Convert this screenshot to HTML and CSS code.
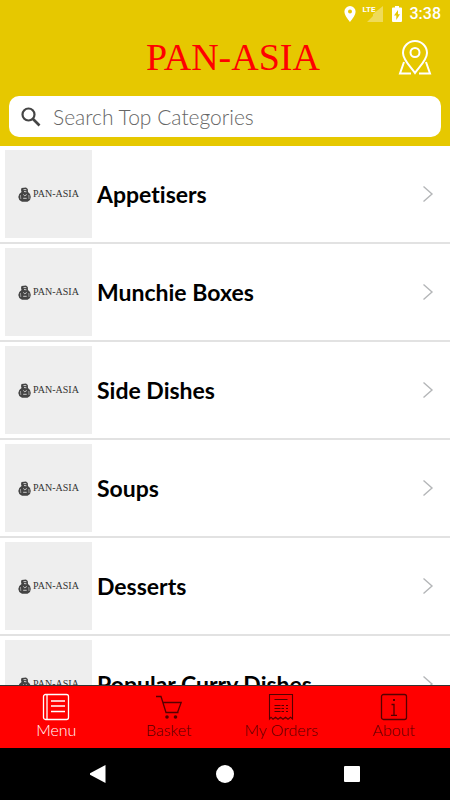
FILE: index.html
```html
<!DOCTYPE html>
<html lang="en">
<head>
<meta charset="utf-8">
<meta name="viewport" content="width=device-width, initial-scale=1">
<title>Pan-Asia</title>
<link rel="stylesheet" href="styles.css">
</head>
<body>
<svg class="defs" aria-hidden="true">
  <symbol id="chevron" viewBox="0 0 12 18"><path d="M1.500 1.500 10 9l-8.500 7.500" fill="none" stroke="#b4b6b8" stroke-width="1.400"/></symbol>
  <symbol id="figure" viewBox="0 0 13 15">
    <path d="M3.500 1 8 .4 9.800 2 10 5l2 2 .8 3-.8 3-2.500 1.700H4L1.300 13 .3 10l1-3L3.500 5 3 3z" fill="#444"/>
    <path d="M5.500 2.600h2.800M6 4.500l2.400.3M5.300 7.500l1.500 1.300 2-1.300M5.200 11.300h3.500" fill="none" stroke="#ccc" stroke-width="1"/>
    <path d="M2.400 8l.4 4M10.800 8l.2 4" fill="none" stroke="#999" stroke-width="1"/>
  </symbol>
</svg>
<div class="app">
  <header class="header">
    <div class="status">
      <svg width="12" height="16" viewBox="0 0 12 16"><path fill="#fff" fill-rule="evenodd" d="M6 0a5.600 5.600 0 0 0-5.600 5.600C.4 9.800 6 16 6 16s5.600-6.200 5.600-10.400A5.600 5.600 0 0 0 6 0zm0 3.600a2 2 0 1 1 0 4 2 2 0 0 1 0-4z"/></svg>
      <span class="signal"><svg width="20" height="16" viewBox="0 0 20 16"><path fill="#fff" fill-opacity=".35" d="M20 0v16H4l6-6V8z"/></svg><span class="lte">LTE</span></span>
      <svg class="battery" width="10" height="16" viewBox="0 0 10 16"><path fill="#fff" fill-rule="evenodd" d="M3 0h4v1.500h2q1 0 1 1V15q0 1-1 1H1q-1 0-1-1V2.500q0-1 1-1h2zm3 4L2 9.500h2.300V14L8 8.300H6z"/></svg>
      <span class="time">3:38</span>
    </div>
    <div class="titlebar">
      <h1 class="title">PAN-ASIA</h1>
      <button class="locate" aria-label="Find us">
        <svg width="34" height="36" viewBox="0 0 34 36" fill="none" stroke="#fff" stroke-width="2"><path d="M17 33C13 27 5 20 5 13a12 12 0 0 1 24 0c0 7-8 14-12 20z"/><circle cx="17" cy="12.500" r="4.500"/><path d="M6 22 2 33.500h11M28 22l4 11.500H21"/></svg>
      </button>
    </div>
    <label class="search">
      <svg width="20" height="20" viewBox="0 0 20 20" fill="none" stroke="#444"><circle cx="7.500" cy="7.500" r="6" stroke-width="2.200"/><path d="m12 12 6.500 6.500" stroke-width="2.600"/></svg>
      <input type="search" placeholder="Search Top Categories" aria-label="Search Top Categories">
    </label>
  </header>
  <main class="list">
    <button class="row"><span class="thumb"><svg width="13" height="15"><use href="#figure"/></svg>PAN-ASIA</span><span class="name">Appetisers</span><svg width="12" height="18"><use href="#chevron"/></svg></button>
    <button class="row"><span class="thumb"><svg width="13" height="15"><use href="#figure"/></svg>PAN-ASIA</span><span class="name">Munchie Boxes</span><svg width="12" height="18"><use href="#chevron"/></svg></button>
    <button class="row"><span class="thumb"><svg width="13" height="15"><use href="#figure"/></svg>PAN-ASIA</span><span class="name">Side Dishes</span><svg width="12" height="18"><use href="#chevron"/></svg></button>
    <button class="row"><span class="thumb"><svg width="13" height="15"><use href="#figure"/></svg>PAN-ASIA</span><span class="name">Soups</span><svg width="12" height="18"><use href="#chevron"/></svg></button>
    <button class="row"><span class="thumb"><svg width="13" height="15"><use href="#figure"/></svg>PAN-ASIA</span><span class="name">Desserts</span><svg width="12" height="18"><use href="#chevron"/></svg></button>
    <button class="row"><span class="thumb"><svg width="13" height="15"><use href="#figure"/></svg>PAN-ASIA</span><span class="name">Popular Curry Dishes</span><svg width="12" height="18"><use href="#chevron"/></svg></button>
  </main>
  <nav class="tabs">
    <button class="tab active">
      <svg width="28" height="28" viewBox="0 0 28 28" fill="none" stroke="currentColor" stroke-width="1.300"><rect x="1.500" y="1.500" width="25" height="25" rx="2"/><path d="M5 1.500v25M9 8h14M9 13h14M9 18.500h14"/></svg>
      <span>Menu</span>
    </button>
    <button class="tab">
      <svg width="28" height="28" viewBox="0 0 28 28" fill="none" stroke="currentColor" stroke-width="1.300"><path d="M1 3.500h5l5 16h12.500M7.500 9.500h18.700l-3.700 10"/><g fill="currentColor" stroke="none"><circle cx="12" cy="24" r="1.800"/><circle cx="20.500" cy="24" r="1.800"/></g></svg>
      <span>Basket</span>
    </button>
    <button class="tab">
      <svg width="28" height="28" viewBox="0 0 28 28" fill="none" stroke="currentColor" stroke-width="1.100"><path d="M2.500 26V1.500h23V26l-2-1.800-2.500 2-2.500-2-2.500 2-2.500-2-2.500 2-2.500-2-2.500 2-2-2zM7.500 6.500h13"/><path d="M7.500 12.500h6m1 0h2.500m2 0h2M7.500 15.500h6m1 0h2.500m2 0h2M7.500 18.500h6m1 0h2.500m2 0h2"/></svg>
      <span>My Orders</span>
    </button>
    <button class="tab">
      <svg width="28" height="28" viewBox="0 0 28 28" fill="none" stroke="currentColor" stroke-width="1.300"><rect x="1.500" y="1.500" width="25" height="25" rx="2"/><path d="M11.500 11.500H14v10.800M11 22.300h6"/><path d="M13 7h2" stroke-width="2"/></svg>
      <span>About</span>
    </button>
  </nav>
  <div class="system">
    <button aria-label="Back"><svg width="18" height="18" viewBox="0 0 18 18" fill="#fff"><path d="M16.500 0v18L1 9.800V8.300z"/></svg></button>
    <button aria-label="Home"><svg width="18" height="18" viewBox="0 0 18 18" fill="#fff"><circle cx="9" cy="9" r="9"/></svg></button>
    <button aria-label="Recent apps"><svg width="18" height="18" viewBox="0 0 18 18" fill="#fff"><rect x="1" y="1" width="16" height="16" rx="1"/></svg></button>
  </div>
</div>
</body>
</html>
```
FILE: styles.css
```css
* { box-sizing: border-box; }
body { margin: 0; font-family: Lato, "Liberation Sans", sans-serif; font-variant-ligatures: none; background: #fff; }
button { border: 0; padding: 0; background: none; color: inherit; font: inherit; font-variant-ligatures: none; }
svg { flex: none; }
.defs { position: absolute; width: 0; height: 0; }
.app { display: flex; flex-direction: column; height: 100vh; overflow: hidden; }

.header { flex: none; background: #e6c800; padding: 0 9px 9px; }
.status { display: flex; align-items: center; justify-content: flex-end; height: 28px; color: #fff; }
.signal { position: relative; display: flex; margin: 0 9px 0 7px; }
.lte { position: absolute; left: 0; top: 0; font: 700 8px/8px Roboto, sans-serif; }
.time { margin-left: 8px; font: 500 16px/20px Roboto, sans-serif; }
.titlebar { display: grid; grid-template-columns: 68px 1fr 52px; align-items: center; height: 60px; }
.title { grid-column: 2; margin: 0; padding-bottom: 2px; text-align: center; color: #f00; font: 400 38px/44px "Liberation Serif", serif; }
.locate { display: flex; justify-content: center; }
.search { display: flex; align-items: center; gap: 12px; height: 41px; margin-top: 8px; padding: 0 12px; border-radius: 10px; background: #fff; }
.search input { flex: 1; min-width: 0; border: 0; padding: 0; outline: 0; background: none; font: 300 21px/26px Lato, sans-serif; appearance: none; }
.search input::placeholder { color: #666; opacity: 1; }

.list { flex: 1; min-height: 0; overflow: hidden; }
.row { display: flex; align-items: center; width: 100%; padding: 4px 16px 4px 5px; border-bottom: 2px solid #e2e2e2; text-align: left; }
.thumb { display: flex; align-items: center; justify-content: center; gap: 2px; width: 87px; height: 88px; background: #eee; color: #333; font: 400 10px/12px "Liberation Serif", serif; }
.name { flex: 1; margin-left: 5px; color: #000; font-weight: 700; font-size: 23px; line-height: 28px; }

.tabs { flex: none; display: grid; grid-template-columns: repeat(4, 1fr); height: 63px; border-top: 1px solid #333; background: #f00; color: #500; }
.tab { display: flex; flex-direction: column; align-items: center; padding-top: 7px; font-weight: 300; font-size: 16px; line-height: 18px; }
.tab.active { color: #fff; }
.system { flex: none; display: flex; justify-content: center; align-items: center; gap: 109px; height: 52px; background: #000; }
.system button { display: flex; }
```
